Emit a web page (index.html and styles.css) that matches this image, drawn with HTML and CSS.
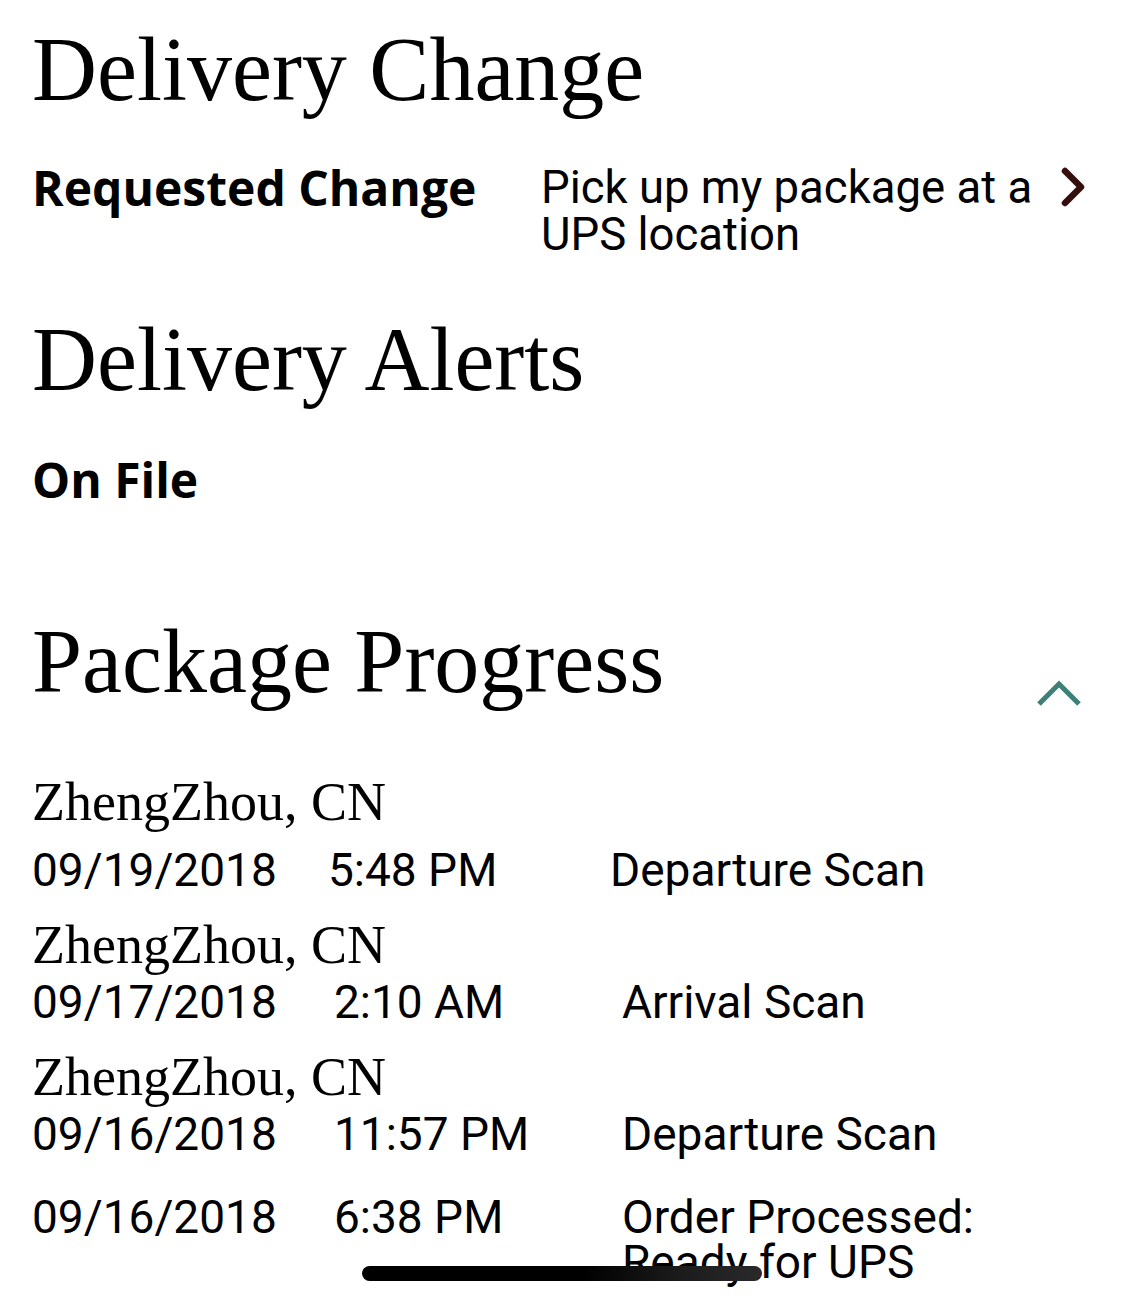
FILE: index.html
```html
<!DOCTYPE html>
<html>
<head>
<meta charset="utf-8">
<link rel="stylesheet" href="styles.css">
</head>
<body>
<main class="page">
  <section class="section first">
    <h1 class="heading">Delivery Change</h1>
    <div class="change-row">
      <div class="label req">Requested Change</div>
      <div class="change-value">Pick up my package at a UPS location</div>
      <svg class="chev-right" width="30" height="44" viewBox="0 0 30 44"><path d="M7 6 L23 22 L7 38" fill="none" stroke="#350e0e" stroke-width="6.5" stroke-linecap="round" stroke-linejoin="round"/></svg>
    </div>
  </section>
  <section class="section alerts">
    <h1 class="heading">Delivery Alerts</h1>
    <div class="label onfile">On File</div>
  </section>
  <section class="section progress">
    <div class="progress-head">
      <h1 class="heading">Package Progress</h1>
      <svg class="chev-up" width="46" height="30" viewBox="0 0 46 30"><path d="M3 26 L23 6 L43 26" fill="none" stroke="#3d8078" stroke-width="5"/></svg>
    </div>
    <div class="events">
      <div class="event">
        <div class="city">ZhengZhou, CN</div>
        <div class="ev-row wide"><span>09/19/2018</span><span>5:48 PM</span><span class="desc">Departure Scan</span></div>
      </div>
      <div class="event">
        <div class="city">ZhengZhou, CN</div>
        <div class="ev-row"><span>09/17/2018</span><span>2:10 AM</span><span class="desc">Arrival Scan</span></div>
      </div>
      <div class="event">
        <div class="city">ZhengZhou, CN</div>
        <div class="ev-row"><span>09/16/2018</span><span>11:57 PM</span><span class="desc">Departure Scan</span></div>
      </div>
      <div class="event last">
        <div class="ev-row"><span>09/16/2018</span><span>6:38 PM</span><span class="desc">Order Processed: Ready for UPS</span></div>
      </div>
    </div>
  </section>
  <div class="home-indicator"></div>
</main>
</body>
</html>
```

FILE: styles.css
```css
html, body {
  margin: 0;
  padding: 0;
  background: #fff;
  color: #000;
}
.page {
  width: 1125px;
  height: 1306px;
  overflow: hidden;
  position: relative;
  padding: 0 32px;
  box-sizing: border-box;
}
.heading {
  font-family: "Liberation Serif", serif;
  font-weight: normal;
  font-size: 90px;
  line-height: 90px;
  margin: 0;
  white-space: nowrap;
}
.section.first {
  padding-top: 25px;
}
.label {
  font-family: "Open Sans", sans-serif;
  font-weight: bold;
  font-size: 48px;
  line-height: 48px;
}
.change-row {
  display: flex;
  align-items: flex-start;
  margin-top: 49px;
}
.label.req {
  width: 509px;
  flex: none;
}
.change-value {
  font-family: "Roboto", sans-serif;
  font-size: 45.5px;
  line-height: 47px;
  width: 500px;
  flex: none;
}
.chev-right {
  margin-left: 17px;
  margin-top: 1px;
  flex: none;
}
.alerts {
  margin-top: 57px;
}
.onfile {
  margin-top: 51px;
}
.progress {
  margin-top: 113px;
}
.progress-head {
  display: flex;
  justify-content: space-between;
  align-items: flex-start;
}
.chev-up {
  margin-top: 61px;
  margin-right: 11px;
  flex: none;
}
.events {
  margin-top: 67px;
}
.city {
  font-family: "Liberation Serif", serif;
  font-size: 54px;
  line-height: 54px;
}
.ev-row {
  display: grid;
  grid-template-columns: 302px 288px 380px;
  font-family: "Roboto", sans-serif;
  font-size: 46px;
  line-height: 45px;
  margin-top: 8px;
}
.ev-row.wide {
  grid-template-columns: 296px 282px 380px;
  margin-top: 19px;
}
.event + .event {
  margin-top: 25px;
}
.event.last {
  margin-top: 38px;
}
.home-indicator {
  position: absolute;
  left: 362px;
  top: 1266px;
  width: 400px;
  height: 15px;
  border-radius: 8px;
  background: linear-gradient(90deg, #000 0%, #000 55%, #1c1c1c 80%, #2a2a2a 100%);
}
```
